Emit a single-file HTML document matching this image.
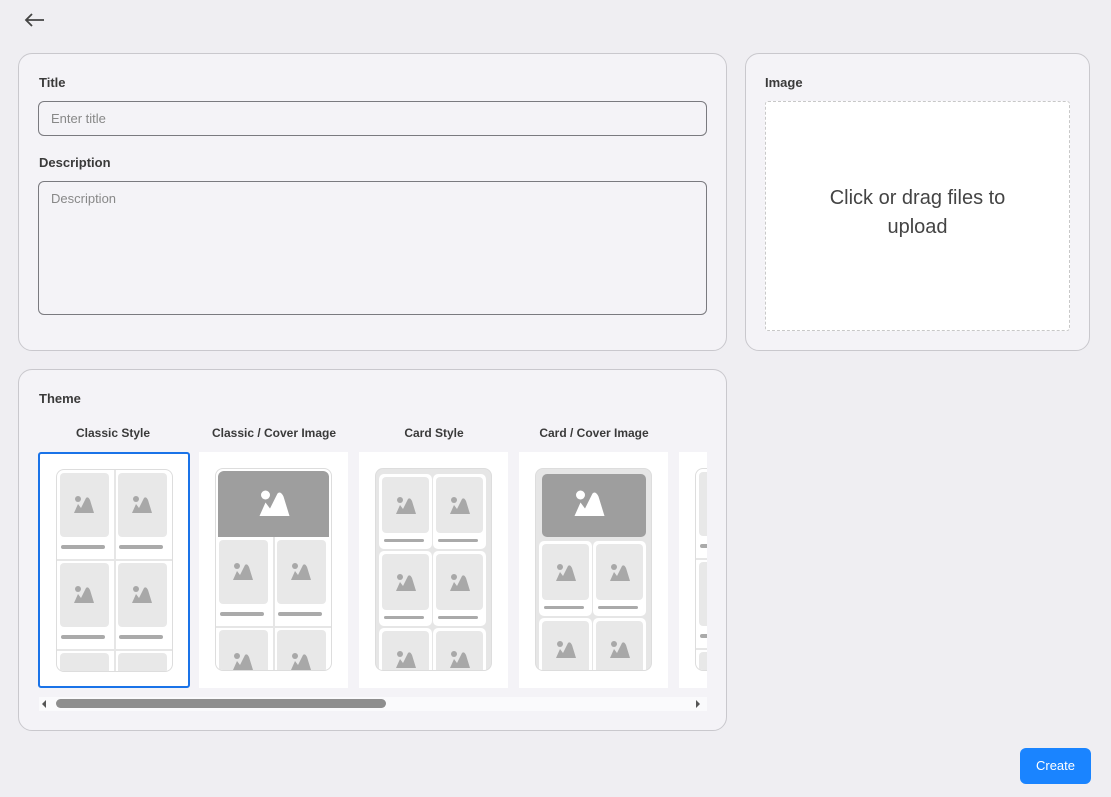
<!DOCTYPE html>
<html><head><meta charset="utf-8">
<style>
*{box-sizing:border-box;margin:0;padding:0}
body{width:1111px;height:797px;background:#efeef2;font-family:"Liberation Sans",sans-serif;color:#333;position:relative;overflow:hidden}
.card{position:absolute;background:#f4f3f7;border:1px solid #c9c8cd;border-radius:14px}
.lbl{position:absolute;font-size:13px;font-weight:bold;color:#3a3a3a}
.inp{position:absolute;border:1px solid #7a7a7f;border-radius:6px;font-size:13px;color:#888;padding:9px 12px;background:#f4f3f7}
.tile{position:absolute;top:452px;width:149px;height:236px;background:#fff}
.tl{position:absolute;top:426px;width:150px;text-align:center;font-size:12px;font-weight:bold;color:#3a3a3a;white-space:nowrap}
.ph{position:absolute;left:16px;top:16px;width:117px;height:203px;border:1px solid #ddd;border-radius:8px;overflow:hidden;background:#fff}
.ph div{position:absolute}
</style></head><body>
<svg style="position:absolute;left:23px;top:12px" width="22" height="16" viewBox="0 0 22 16"><path d="M9 2L3 8L9 14M3 8H21" fill="none" stroke="#444" stroke-width="1.8"/></svg>

<div class="card" style="left:18px;top:53px;width:709px;height:298px"></div>
<div class="lbl" style="left:39px;top:75px">Title</div>
<div class="inp" style="left:38px;top:101px;width:669px;height:35px">Enter title</div>
<div class="lbl" style="left:39px;top:155px">Description</div>
<div class="inp" style="left:38px;top:181px;width:669px;height:134px">Description</div>

<div class="card" style="left:745px;top:53px;width:345px;height:298px"></div>
<div class="lbl" style="left:765px;top:75px">Image</div>
<div style="position:absolute;left:765px;top:101px;width:305px;height:230px;background:#fff;border:1px dashed #c8c8c8;border-radius:3px;text-align:center;font-size:20px;color:#444;padding-top:82px;line-height:29px">Click or drag files to<br>upload</div>

<div class="card" style="left:18px;top:369px;width:709px;height:362px"></div>
<div class="lbl" style="left:39px;top:391px">Theme</div>
<div style="position:absolute;left:38px;top:420px;width:669px;height:300px;overflow:hidden">
<div id="tiles" style="position:absolute;left:-38px;top:-420px;width:1000px;height:800px"></div>
</div>
<div style="position:absolute;left:39px;top:697px;width:668px;height:14px;background:#fafafc"></div>
<div style="position:absolute;left:56px;top:699px;width:330px;height:9px;background:#8e8e8e;border-radius:5px"></div>
<div style="position:absolute;left:42px;top:700px;width:0;height:0;border-top:4px solid transparent;border-bottom:4px solid transparent;border-right:4px solid #555"></div>
<div style="position:absolute;left:696px;top:700px;width:0;height:0;border-top:4px solid transparent;border-bottom:4px solid transparent;border-left:4px solid #555"></div>

<div style="position:absolute;left:1020px;top:748px;width:71px;height:36px;background:#1a84ff;border-radius:6px;color:#fff;font-size:13px;text-align:center;line-height:36px">Create</div>

<div style="display:none">
<span>Classic Style</span><span>Classic / Cover Image</span><span>Card Style</span><span>Card / Cover Image</span>
</div>
<script>
var ic=function(x,y,s,c){return '<svg style="position:absolute;left:'+x+'px;top:'+y+'px" width="'+(22*s)+'" height="'+(18*s)+'" viewBox="0 0 22 18"><circle cx="5" cy="4" r="3" fill="'+c+'"/><path d="M1 18L5 9L8 13L13 3Q15 1 17 5L21 18Z" fill="'+c+'"/></svg>';};
function cell(x,y,card){
  var h='';
  if(card){h+='<div style="left:'+x+'px;top:'+y+'px;width:53px;height:75px;background:#fff;border-radius:5px"></div>';
    h+='<div style="left:'+(x+3)+'px;top:'+(y+3)+'px;width:47px;height:56px;background:#e8e8e8;border-radius:4px"></div>'+ic(x+16,y+22,1,'#a8a8a8');
    h+='<div style="left:'+(x+5)+'px;top:'+(y+65)+'px;width:40px;height:3px;background:#aaa;border-radius:2px"></div>';}
  else{h+='<div style="left:'+(x+3)+'px;top:'+(y+3)+'px;width:49px;height:64px;background:#e8e8e8;border-radius:4px"></div>'+ic(x+16,y+25,1,'#a8a8a8');
    h+='<div style="left:'+(x+4)+'px;top:'+(y+75)+'px;width:44px;height:4px;background:#aaa;border-radius:2px"></div>';}
  return h;
}
var names=['Classic Style','Classic / Cover Image','Card Style','Card / Cover Image','Classic Style'];
var out='';
for(var t=0;t<5;t++){
  var X=38+161*t-(t>0?t-1:0),p='';
  var card=(t==2||t==3),cover=(t==1||t==3);
  var y0=0;
  if(cover){
    if(card){p+='<div style="left:6px;top:5px;width:104px;height:63px;background:#9e9e9e;border-radius:5px"></div>'+ic(37,20,1.5,'#fff');y0=72;}
    else{p+='<div style="left:2px;top:2px;width:111px;height:66px;background:#9e9e9e;border-radius:6px 6px 0 0"></div>'+ic(42,20,1.5,'#fff');y0=68;}
  }
  for(var r=0;r<3;r++){
    if(card){var yy=(cover?y0:5)+r*77;p+=cell(3,yy,1)+cell(57,yy,1);}
    else{var yy=y0+r*90;p+=cell(0,yy,0)+cell(58,yy,0);
      p+='<div style="left:0;top:'+(yy+89)+'px;width:117px;height:2px;background:#e6e6e6"></div>';}
  }
  if(!card)p+='<div style="left:57px;top:'+y0+'px;width:2px;height:203px;background:#e6e6e6"></div>';
  var bg=card?'#e6e6e6':'#fff';
  var sel=t==0?'border:2px solid #1a73e8;border-radius:3px;width:152px;':'';
  out+='<div class="tl" style="left:'+X+'px">'+names[t]+'</div>';
  out+='<div class="tile" style="left:'+X+'px;'+sel+'"><div class="ph" style="background:'+bg+';'+(t==0?'left:16px;top:15px':'')+'">'+p+'</div></div>';
}
document.getElementById('tiles').innerHTML=out;
</script>
</body></html>
